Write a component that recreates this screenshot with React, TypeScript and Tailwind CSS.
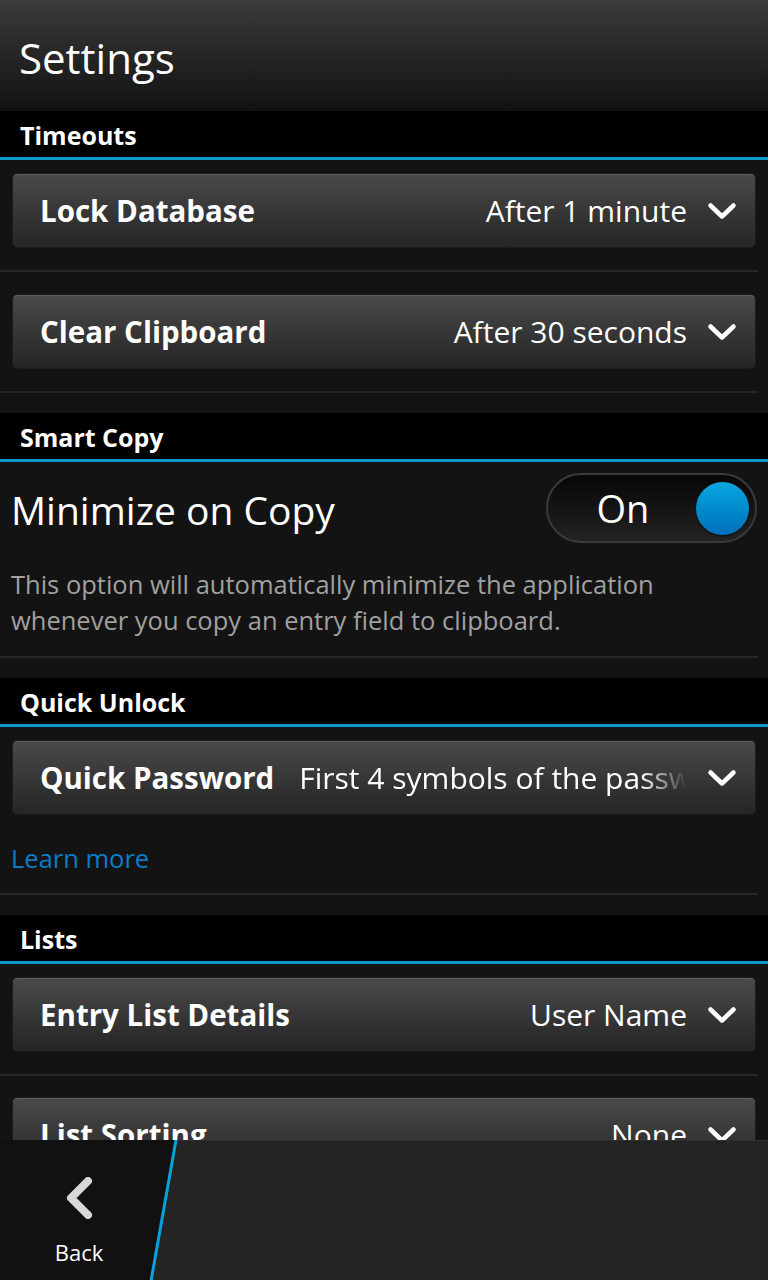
import React from "react";

const FONT = { fontFamily: '"Open Sans", "Noto Sans", sans-serif' };

function Chevron() {
  return (
    <svg width="30" height="18" viewBox="0 0 30 18" className="shrink-0">
      <polyline points="3.5,3.5 15,14.5 26.5,3.5" fill="none" stroke="#ffffff" strokeWidth="4.5" strokeLinecap="round" strokeLinejoin="round" />
    </svg>
  );
}

function SectionHeader({ title }: { title: string }) {
  return (
    <div className="bg-black h-[49px] border-b-[3px] border-[#0a98cf] flex items-center pl-[20px] pt-[2px]">
      <span className="text-white font-bold text-[25px] leading-none">{title}</span>
    </div>
  );
}

function Dropdown({ label, value, fade }: { label: string; value: string; fade?: boolean }) {
  return (
    <div className="mx-[12px] h-[75px] rounded-[5px] border border-[#1c1c1c] bg-gradient-to-b from-[#4a4a4a] to-[#252525] shadow-[inset_0_1px_0_#5c5c5c] flex items-center pl-[27px] pr-[18px] overflow-hidden">
      <span className="font-bold text-[29.5px] text-white whitespace-nowrap leading-none">{label}</span>
      {fade ? (
        <span className="ml-[25px] flex-1 overflow-hidden whitespace-nowrap text-[30px] text-white leading-[42px] [mask-image:linear-gradient(to_right,black_88%,transparent_100%)]">
          {value}
        </span>
      ) : (
        <span className="flex-1 text-right whitespace-nowrap text-[30px] text-white leading-[42px]">{value}</span>
      )}
      <span className="ml-[20px] flex items-center">
        <Chevron />
      </span>
    </div>
  );
}

function Separator() {
  return <div className="h-[2px] bg-[#262626] mr-[10px]" />;
}

export default function App() {
  return (
    <div className="h-[1280px] w-[768px] bg-[#131313] flex flex-col overflow-hidden" style={FONT}>
      {/* Title bar */}
      <div className="h-[111px] shrink-0 bg-gradient-to-b from-[#3b3b3b] to-[#121212] flex items-center pl-[19px] pt-[4px]">
        <span className="text-white text-[42px] leading-none">Settings</span>
      </div>

      {/* Content */}
      <div className="flex-1 overflow-hidden">
        <SectionHeader title="Timeouts" />
        <div className="pt-[13px]">
          <Dropdown label="Lock Database" value="After 1 minute" />
        </div>
        <div className="pt-[22px] pb-[22px]">
          <Separator />
        </div>
        <Dropdown label="Clear Clipboard" value="After 30 seconds" />
        <div className="pt-[22px] pb-[20px]">
          <Separator />
        </div>

        <SectionHeader title="Smart Copy" />
        <div className="pt-[11px] pl-[11px] pr-[11px] flex items-center justify-between">
          <span className="text-white text-[39px] leading-none pt-[3px]">Minimize on Copy</span>
          <div className="w-[211px] h-[70px] rounded-full border-2 border-[#3a3a3a] bg-gradient-to-b from-[#070707] to-[#232323] flex items-center pr-[6px]">
            <span className="flex-1 text-center text-white text-[38px] leading-none pl-[2px]">On</span>
            <span className="w-[53px] h-[53px] rounded-full bg-gradient-to-b from-[#0ba6e0] to-[#0070bb] shadow-[0_1px_2px_rgba(0,0,0,0.6)]" />
          </div>
        </div>
        <p className="mt-[23px] pl-[11px] pr-[11px] text-[#a0a0a0] text-[25.5px] leading-[36px]">
          This option will automatically minimize the application whenever you copy an entry field to clipboard.
        </p>
        <div className="pt-[18px] pb-[20px]">
          <Separator />
        </div>

        <SectionHeader title="Quick Unlock" />
        <div className="pt-[13px]">
          <Dropdown label="Quick Password" value="First 4 symbols of the password" fade />
        </div>
        <div className="pt-[25px] pl-[11px] text-[#0a7cc9] text-[25.5px] leading-[36px]">Learn more</div>
        <div className="pt-[17px] pb-[20px]">
          <Separator />
        </div>

        <SectionHeader title="Lists" />
        <div className="pt-[13px]">
          <Dropdown label="Entry List Details" value="User Name" />
        </div>
        <div className="pt-[22px] pb-[21px]">
          <Separator />
        </div>
        <Dropdown label="List Sorting" value="None" />
      </div>

      {/* Bottom action bar */}
      <div className="h-[140px] shrink-0 bg-[#242424] border-t border-[#2e2e2e] flex">
        <div className="relative w-[180px] h-full">
          <svg className="absolute left-0 -top-px" width="180" height="141" viewBox="0 0 180 141">
            <polygon points="0,0 176,0 151,141 0,141" fill="#111111" />
            <line x1="176" y1="0" x2="151" y2="141" stroke="#0aa2dc" strokeWidth="3" />
          </svg>
          <div className="relative w-[158px] h-full flex flex-col items-center pt-[36px]">
            <svg width="30" height="42" viewBox="0 0 30 42">
              <polyline points="24,4 7,21 24,38" fill="none" stroke="#d8d8d8" strokeWidth="8" strokeLinecap="round" strokeLinejoin="round" />
            </svg>
            <span className="mt-[22px] text-white text-[22px] leading-none">Back</span>
          </div>
        </div>
      </div>
    </div>
  );
}
